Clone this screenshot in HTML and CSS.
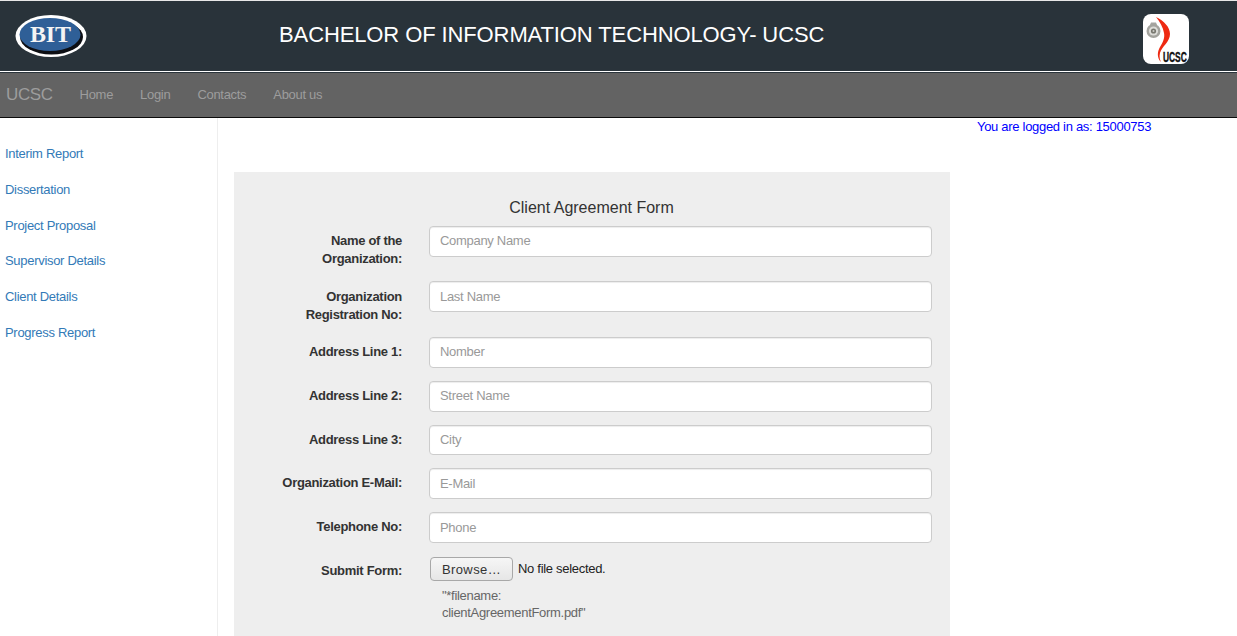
FILE: index.html
```html
<!DOCTYPE html>
<html lang="en">
<head>
<meta charset="utf-8">
<title>Client Agreement Form</title>
<link rel="stylesheet" href="styles.css">
</head>
<body>
<header class="banner">
  <svg class="bit-logo" width="72" height="44" viewBox="0 0 72 44" aria-label="BIT logo">
    <ellipse cx="36" cy="22" rx="35.5" ry="21" fill="#fff"/>
    <ellipse cx="36.5" cy="23" rx="31.5" ry="17.5" fill="#0d0f14"/>
    <ellipse cx="35" cy="20.5" rx="30.5" ry="16.5" fill="#2f5f97"/>
    <text x="35.5" y="28" text-anchor="middle" class="bit-text" textLength="41" lengthAdjust="spacing">BIT</text>
  </svg>
  <h1 class="banner-title">BACHELOR OF INFORMATION TECHNOLOGY- UCSC</h1>
  <svg class="ucsc-logo" width="46" height="50" viewBox="0 0 46 50" aria-label="UCSC logo">
    <rect width="46" height="50" rx="8" fill="#fff"/>
    <path d="M8 8.5h5l1 2.5H7z" fill="#a5a5a1"/>
    <circle cx="10.5" cy="17" r="7" fill="#a3a39e"/>
    <circle cx="10.5" cy="17" r="4.6" fill="#dcdcd8"/>
    <circle cx="10.5" cy="17" r="2.6" fill="#77776f"/>
    <circle cx="10.5" cy="17" r="1" fill="#c9c9c5"/>
    <path d="M13 3C21 7 27 13 27 20C27 28 19 32 17 39C16 43 17 46 18 48C14 44 14 38 17 33C20 28 22 24 21 19C20 13 17 8 13 3Z" fill="#ee2a12"/>
    <text transform="translate(20 48) scale(.6 1)" class="ucsc-text">UCSC</text>
  </svg>
</header>
<nav class="navbar">
  <a class="brand" href="#">UCSC</a>
  <a class="nav-link" href="#">Home</a>
  <a class="nav-link" href="#">Login</a>
  <a class="nav-link" href="#">Contacts</a>
  <a class="nav-link" href="#">About us</a>
</nav>
<div class="layout">
  <aside class="sidebar">
    <a href="#">Interim Report</a>
    <a href="#">Dissertation</a>
    <a href="#">Project Proposal</a>
    <a href="#">Supervisor Details</a>
    <a href="#">Client Details</a>
    <a href="#">Progress Report</a>
  </aside>
  <main class="content">
    <p class="login-note">You are logged in as: 15000753</p>
    <form class="panel">
      <h2 class="form-title">Client Agreement Form</h2>
      <div class="row">
        <label class="field-label" for="f1">Name of the Organization:</label>
        <input class="field" id="f1" type="text" placeholder="Company Name">
      </div>
      <div class="row">
        <label class="field-label" for="f2">Organization Registration No:</label>
        <input class="field" id="f2" type="text" placeholder="Last Name">
      </div>
      <div class="row">
        <label class="field-label" for="f3">Address Line 1:</label>
        <input class="field" id="f3" type="text" placeholder="Nomber">
      </div>
      <div class="row">
        <label class="field-label" for="f4">Address Line 2:</label>
        <input class="field" id="f4" type="text" placeholder="Street Name">
      </div>
      <div class="row">
        <label class="field-label" for="f5">Address Line 3:</label>
        <input class="field" id="f5" type="text" placeholder="City">
      </div>
      <div class="row">
        <label class="field-label" for="f6">Organization E-Mail:</label>
        <input class="field" id="f6" type="text" placeholder="E-Mail">
      </div>
      <div class="row">
        <label class="field-label" for="f7">Telephone No:</label>
        <input class="field" id="f7" type="text" placeholder="Phone">
      </div>
      <div class="row">
        <label class="field-label" for="f8">Submit Form:</label>
        <div class="file-cell">
          <div class="file-line">
            <button class="browse" id="f8" type="button">Browse…</button>
            <span class="file-state">No file selected.</span>
          </div>
          <p class="hint">"*filename:<br>clientAgreementForm.pdf"</p>
        </div>
      </div>
    </form>
  </main>
</div>
</body>
</html>
```
FILE: styles.css
```css
* { box-sizing: border-box; }
html, body { height: 100%; }
body {
  margin: 0;
  height: 636px;
  overflow: hidden;
  background: #fff;
  color: #333;
  font: 13px/18px "Liberation Sans", Arial, sans-serif;
  letter-spacing: -.3px;
}
a { text-decoration: none; }
.banner {
  height: 72px;
  padding: 0 48px 0 15px;
  display: flex;
  align-items: center;
  background: #29333a;
  border-top: 1px solid #e8e8e8;
  border-bottom: 1px solid #fff;
}
.bit-logo { flex: none; }
.bit-text { font: bold 24px "Liberation Serif", serif; fill: #f4f4f4; letter-spacing: 0; }
.banner-title {
  margin: 0 0 2px 192px;
  flex: 1;
  color: #fff;
  font-size: 22px;
  font-weight: 400;
  line-height: 30px;
  letter-spacing: -.11px;
}
.ucsc-logo { flex: none; margin-top: 6px; }
.ucsc-text { font: bold 14px "Liberation Sans", sans-serif; fill: #111; stroke: #111; stroke-width: .4px; letter-spacing: 0; }
.navbar {
  height: 46px;
  padding-left: 6px;
  display: flex;
  align-items: center;
  gap: 27px;
  background: #636363;
  border-top: 1px solid #29333a;
  border-bottom: 1px solid #0c0c0c;
}
.brand { color: #9d9d9d; font-size: 17px; letter-spacing: -.4px; }
.nav-link { color: #9d9d9d; }
.layout { display: flex; height: 518px; }
.sidebar {
  width: 218px;
  flex: none;
  padding: 27px 0 0 5px;
  display: flex;
  flex-direction: column;
  gap: 17.8px;
  border-right: 1px solid #eee;
}
.sidebar a { color: #337ab7; }
.content { flex: 1; padding-left: 16px; position: relative; }
.login-note {
  margin: 0;
  position: absolute;
  top: 0;
  left: 759px;
  color: #00f;
}
.panel {
  width: 716px;
  height: 470px;
  margin-top: 54px;
  padding: 26px 18px 0 0;
  background: #eee;
}
.form-title {
  margin: 0 0 7.75px;
  padding-left: 17px;
  text-align: center;
  font-size: 16px;
  font-weight: 400;
  line-height: 20px;
  letter-spacing: 0;
}
.row {
  display: grid;
  grid-template-columns: 168px 503px;
  column-gap: 27px;
  margin-bottom: 13px;
}
.field-label {
  min-height: 30.8px;
  padding-top: 6px;
  text-align: right;
  font-weight: 700;
  margin-left: 40px;
}
.row:nth-of-type(-n+2) .field-label { padding-bottom: .6px; }
.row:nth-of-type(2) .field-label { padding-top: 6.6px; padding-bottom: 0; }
.field {
  width: 503px;
  height: 30.8px;
  padding: 0 10px 1px;
  background: #fff;
  border: 1px solid #ccc;
  border-radius: 4px;
  box-shadow: inset 0 1px 1px rgba(0,0,0,.075);
  color: #555;
  font: inherit;
  letter-spacing: inherit;
}
.field::placeholder { color: #999; opacity: 1; }
.file-line { display: flex; align-items: center; gap: 5px; margin: 1px 0 0 1px; color: #222; }
.file-state { padding-top: 1px; }
.browse {
  width: 83px;
  height: 24px;
  padding: 1px 0 0;
  background: linear-gradient(#f6f6f6, #e6e6e6);
  border: 1px solid #a8a8a8;
  border-radius: 4px;
  color: #333;
  font: 13px "Liberation Sans", sans-serif;
  letter-spacing: .4px;
}
.hint { margin: 6px 0 0 13px; color: #666; line-height: 17.5px; }
```
